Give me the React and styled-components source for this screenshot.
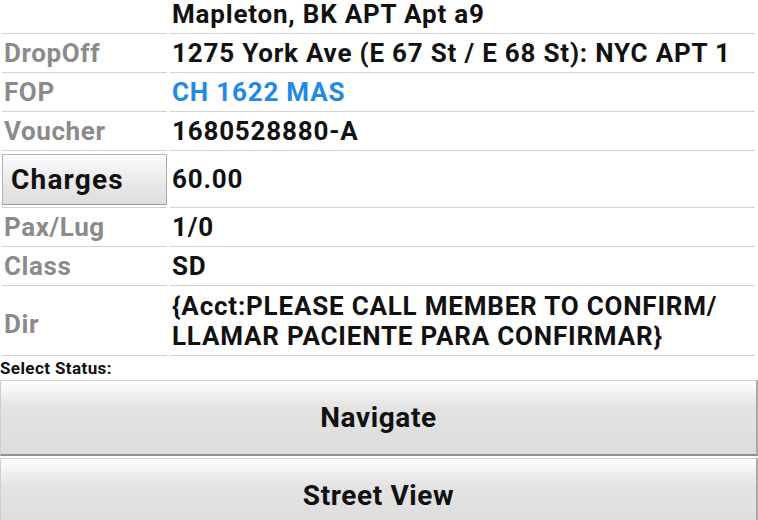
import React from "react";
import styled, { createGlobalStyle } from "styled-components";

const Global = createGlobalStyle`
  html, body { margin: 0; padding: 0; background: #fff; overflow: hidden; }
  body { font-family: Roboto, "Noto Sans", "Liberation Sans", sans-serif; }
`;

const Page = styled.div`
  width: 758px;
  height: 520px;
  overflow: hidden;
  background: #fff;
`;

const Table = styled.div`
  display: flex;
  flex-direction: column;
  margin-top: -5px;
  padding: 0 3px 0 2px;
`;

const Row = styled.div`
  display: grid;
  grid-template-columns: 165px 1fr;
  column-gap: 3px;
  min-height: ${(p) => p.$h || 39}px;
`;

const Label = styled.div`
  display: flex;
  align-items: center;
  border-bottom: 1px solid #d2d2d2;
  font-size: 26px;
  letter-spacing: 0.6px;
  font-weight: 700;
  color: #8b8b8b;
  padding-left: 2px;
  padding-top: ${(p) => (p.$ptop ? p.$ptop : 0)}px;
`;

const Value = styled.div`
  display: flex;
  align-items: center;
  border-bottom: 1px solid #d2d2d2;
  font-size: 26px;
  letter-spacing: 0.8px;
  line-height: 30px;
  font-weight: 700;
  color: ${(p) => (p.$link ? "#2489e6" : "#111")};
  padding-left: 2px;
  white-space: nowrap;
`;

const ChargesCell = styled.div`
  display: flex;
  align-items: center;
  border-bottom: 1px solid #d2d2d2;
  padding: 3px 0 2px;
`;

const ChargesButton = styled.button`
  width: 165px;
  height: 51px;
  margin: 0;
  padding: 0 0 0 8px;
  text-align: left;
  font-family: inherit;
  font-size: 28px;
  letter-spacing: 1.2px;
  font-weight: 700;
  color: #111;
  border: 1px solid #b4b4b4;
  border-bottom-color: #9a9a9a;
  border-right-color: #a8a8a8;
  border-radius: 1px;
  background: linear-gradient(#fbfbfb, #e8e8e8 60%, #dedede);
`;

const StatusLabel = styled.div`
  font-size: 17px;
  letter-spacing: 0.4px;
  font-weight: 700;
  color: #111;
  padding: 3px 0 0 0;
  height: 21px;
  line-height: 18px;
`;

const BigButton = styled.button`
  display: block;
  width: 758px;
  height: 76px;
  margin: 0 0 2px;
  padding: 0;
  font-family: inherit;
  font-size: 28px;
  letter-spacing: 0.6px;
  font-weight: 700;
  color: #111;
  text-align: center;
  border: 1px solid #cfcfcf;
  border-right: 2px solid #a9a9a9;
  border-bottom: 2px solid #8f8f8f;
  background: linear-gradient(#ffffff, #e3e3e3 26px, #dddddd);
`;

const rows = [
  { label: "", value: "Mapleton, BK APT Apt a9" },
  { label: "DropOff", value: "1275 York Ave (E 67 St / E 68 St): NYC APT 1" },
  { label: "FOP", value: "CH 1622 MAS", link: true },
  { label: "Voucher", value: "1680528880-A" },
];

const rows2 = [
  { label: "Pax/Lug", value: "1/0" },
  { label: "Class", value: "SD" },
];

export default function App() {
  return (
    <Page>
      <Global />
      <Table>
        {rows.map((r, i) => (
          <Row key={i}>
            <Label>{r.label}</Label>
            <Value $link={r.link}>{r.value}</Value>
          </Row>
        ))}
        <Row $h={57}>
          <ChargesCell>
            <ChargesButton>Charges</ChargesButton>
          </ChargesCell>
          <Value>60.00</Value>
        </Row>
        {rows2.map((r, i) => (
          <Row key={i}>
            <Label>{r.label}</Label>
            <Value>{r.value}</Value>
          </Row>
        ))}
        <Row $h={70}>
          <Label $ptop={6}>Dir</Label>
          <Value>
            {"{Acct:PLEASE CALL MEMBER TO CONFIRM/"}
            <br />
            {"LLAMAR PACIENTE PARA CONFIRMAR}"}
          </Value>
        </Row>
      </Table>
      <StatusLabel>Select Status:</StatusLabel>
      <BigButton>Navigate</BigButton>
      <BigButton>Street View</BigButton>
    </Page>
  );
}
